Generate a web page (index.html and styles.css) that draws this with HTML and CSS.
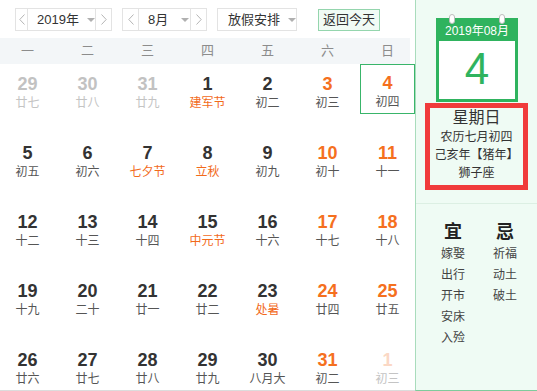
FILE: index.html
```html
<!DOCTYPE html>
<html lang="zh-CN">
<head>
    <meta charset="UTF-8">
    <title>万年历</title>
    <link rel="stylesheet" href="styles.css">
</head>
<body>

<div class="almanac">
    <div class="main">
        <div class="toolbar">
            <div class="picker picker-year">
                <span class="arrow prev"><svg width="6" height="11" viewBox="0 0 6 11"><path d="M5.5 0.5 L0.8 5.5 L5.5 10.5" fill="none" stroke="#b5b5b5" stroke-width="1"/></svg></span>
                <span class="value">2019年<i class="caret"></i></span>
                <span class="arrow next"><svg width="6" height="11" viewBox="0 0 6 11"><path d="M0.5 0.5 L5.2 5.5 L0.5 10.5" fill="none" stroke="#b5b5b5" stroke-width="1"/></svg></span>
            </div>
            <div class="picker picker-month">
                <span class="arrow prev"><svg width="6" height="11" viewBox="0 0 6 11"><path d="M5.5 0.5 L0.8 5.5 L5.5 10.5" fill="none" stroke="#b5b5b5" stroke-width="1"/></svg></span>
                <span class="value">8月<i class="caret"></i></span>
                <span class="arrow next"><svg width="6" height="11" viewBox="0 0 6 11"><path d="M0.5 0.5 L5.2 5.5 L0.5 10.5" fill="none" stroke="#b5b5b5" stroke-width="1"/></svg></span>
            </div>
            <div class="picker picker-holiday">
                <span class="value">放假安排<i class="caret"></i></span>
            </div>
            <a class="today-btn">返回今天</a>
        </div>

        <div class="weekdays">
            <span>一</span><span>二</span><span>三</span><span>四</span><span>五</span><span>六</span><span>日</span>
        </div>

        <div class="days">
            <div class="day other"><b>29</b><em>廿七</em></div>
            <div class="day other"><b>30</b><em>廿八</em></div>
            <div class="day other"><b>31</b><em>廿九</em></div>
            <div class="day"><b>1</b><em class="fest">建军节</em></div>
            <div class="day"><b>2</b><em>初二</em></div>
            <div class="day weekend"><b>3</b><em>初三</em></div>
            <div class="day weekend selected"><b>4</b><em>初四</em></div>

            <div class="day"><b>5</b><em>初五</em></div>
            <div class="day"><b>6</b><em>初六</em></div>
            <div class="day"><b>7</b><em class="fest">七夕节</em></div>
            <div class="day"><b>8</b><em class="fest">立秋</em></div>
            <div class="day"><b>9</b><em>初九</em></div>
            <div class="day weekend"><b>10</b><em>初十</em></div>
            <div class="day weekend"><b>11</b><em>十一</em></div>

            <div class="day"><b>12</b><em>十二</em></div>
            <div class="day"><b>13</b><em>十三</em></div>
            <div class="day"><b>14</b><em>十四</em></div>
            <div class="day"><b>15</b><em class="fest">中元节</em></div>
            <div class="day"><b>16</b><em>十六</em></div>
            <div class="day weekend"><b>17</b><em>十七</em></div>
            <div class="day weekend"><b>18</b><em>十八</em></div>

            <div class="day"><b>19</b><em>十九</em></div>
            <div class="day"><b>20</b><em>二十</em></div>
            <div class="day"><b>21</b><em>廿一</em></div>
            <div class="day"><b>22</b><em>廿二</em></div>
            <div class="day"><b>23</b><em class="fest">处暑</em></div>
            <div class="day weekend"><b>24</b><em>廿四</em></div>
            <div class="day weekend"><b>25</b><em>廿五</em></div>

            <div class="day"><b>26</b><em>廿六</em></div>
            <div class="day"><b>27</b><em>廿七</em></div>
            <div class="day"><b>28</b><em>廿八</em></div>
            <div class="day"><b>29</b><em>廿九</em></div>
            <div class="day"><b>30</b><em>八月大</em></div>
            <div class="day weekend"><b>31</b><em>初二</em></div>
            <div class="day weekend other"><b>1</b><em>初三</em></div>
        </div>
    </div>

    <div class="side">
        <div class="side-top">
            <div class="date-card">
                <i class="ring ring-left"></i>
                <i class="ring ring-right"></i>
                <div class="date-card-head">2019年08月</div>
                <div class="date-card-body">4</div>
            </div>
            <div class="date-info">
                <div class="week-name">星期日</div>
                <div>农历七月初四</div>
                <div>己亥年【猪年】</div>
                <div>狮子座</div>
            </div>
        </div>
        <div class="advice">
            <div class="advice-col">
                <h3>宜</h3>
                <p>嫁娶</p>
                <p>出行</p>
                <p>开市</p>
                <p>安床</p>
                <p>入殓</p>
            </div>
            <div class="advice-col">
                <h3>忌</h3>
                <p>祈福</p>
                <p>动土</p>
                <p>破土</p>
            </div>
        </div>
    </div>
</div>

</body>
</html>
```

FILE: styles.css
```css
* { margin: 0; padding: 0; box-sizing: border-box; }
body {
    font-family: "Liberation Sans", "Noto Sans CJK SC", sans-serif;
    font-size: 12px;
    color: #333;
    background: #fff;
    overflow: hidden;
}
.almanac {
    display: flex;
    width: 537px;
    height: 391px;
}

/* left: month grid */
.main {
    width: 415px;
    height: 391px;
    border-bottom: 1px solid #dcdcdc;
}
.toolbar {
    display: flex;
    align-items: flex-start;
    height: 38px;
    padding: 8px 0 0 15px;
}
.picker {
    display: flex;
    flex-shrink: 0;
    height: 23px;
    border: 1px solid #e3e3e3;
    background: #fff;
    font-size: 13px;
    color: #333;
    white-space: nowrap;
}
.picker .arrow {
    display: flex;
    align-items: center;
    justify-content: center;
    flex-shrink: 0;
    width: 16px;
}
.picker .prev { width: 12px; border-right: 1px solid #e3e3e3; }
.picker .next { border-left: 1px solid #e3e3e3; }
.picker .value {
    display: flex;
    align-items: center;
    flex: 1;
    padding-left: 9px;
    line-height: 21px;
}
.caret {
    display: inline-block;
    margin-left: 8px;
    border-left: 4px solid transparent;
    border-right: 4px solid transparent;
    border-top: 4px solid #b0b0b0;
}
.picker-year { width: 97px; }
.picker-month { width: 85px; margin-left: 10px; }
.picker-month .prev { width: 16px; }
.picker-month .value { padding-left: 9px; }
.picker-month .caret { margin-left: 13px; }
.picker-holiday { width: 80px; margin-left: 10px; }
.picker-holiday .value { padding-left: 10px; }
.today-btn {
    display: block;
    flex-shrink: 0;
    width: 62px;
    height: 22px;
    margin: 1px 0 0 21px;
    border: 1px solid #94d5ad;
    background: #f1fbf5;
    font-size: 13px;
    line-height: 20px;
    text-align: center;
    color: #333;
    cursor: pointer;
}

.weekdays {
    display: grid;
    grid-template-columns: repeat(7, 55px);
    column-gap: 5px;
    width: 410px;
    height: 26px;
    background: #f3f6f8;
    font-size: 13px;
    line-height: 26px;
    color: #8c8c8c;
    text-align: center;
}
.days {
    display: grid;
    grid-template-columns: repeat(7, 55px);
    grid-auto-rows: 50px;
    gap: 19px 5px;
}
.day {
    padding-top: 9px;
    text-align: center;
    border: 1px solid transparent;
}
.day b {
    display: block;
    font-size: 18px;
    line-height: 21px;
    color: #333;
}
.day em {
    display: block;
    font-style: normal;
    font-size: 12px;
    line-height: 16px;
    color: #555;
}
.day .fest { color: #f26a1b; }
.day.weekend b { color: #f5701e; }
.day.other b { color: #c2c2c2; }
.day.other em { color: #c4c4c4; }
.day.weekend.other b { color: #fbd8c5; }
.day.selected { border-color: #39b56a; padding-top: 8px; }

/* right: today panel */
.side {
    width: 122px;
    height: 391px;
    border-left: 1px solid #a9dcbc;
    border-bottom: 1px solid #7fcb9c;
    background: #effbf4;
}
.side-top {
    height: 204px;
    padding-top: 18px;
    border-bottom: 1px solid #dcefe3;
}
.date-card {
    position: relative;
    width: 82px;
    margin: 0 0 0 20px;
}
.ring {
    position: absolute;
    top: -4px;
    width: 6px;
    height: 10px;
    border: 1px solid #bdbdbd;
    border-radius: 3px;
    background: #fff;
}
.ring-left { left: 13px; }
.ring-right { left: 63px; }
.date-card-head {
    height: 23px;
    padding-top: 3px;
    background: #2fb35e;
    color: #fff;
    font-size: 12px;
    line-height: 20px;
    text-align: center;
}
.date-card-body {
    height: 61px;
    border: 3px solid #2fb35e;
    border-top: none;
    background: #fff;
    color: #2fb35e;
    font-size: 44px;
    line-height: 56px;
    text-align: center;
}
.date-info {
    width: 103px;
    margin: 1px 0 0 9px;
    padding-bottom: 3px;
    border: 5px solid #f03b3b;
    font-size: 12px;
    line-height: 18px;
    text-align: center;
    color: #333;
}
.date-info .week-name {
    font-size: 16px;
    line-height: 20px;
}

.advice {
    display: flex;
    gap: 12px;
    padding: 16px 0 0 17px;
}
.advice-col {
    width: 40px;
    text-align: center;
}
.advice-col h3 {
    font-size: 18px;
    line-height: 24px;
    font-weight: bold;
    color: #222;
}
.advice-col p {
    font-size: 12px;
    line-height: 21px;
    color: #444;
}
```
